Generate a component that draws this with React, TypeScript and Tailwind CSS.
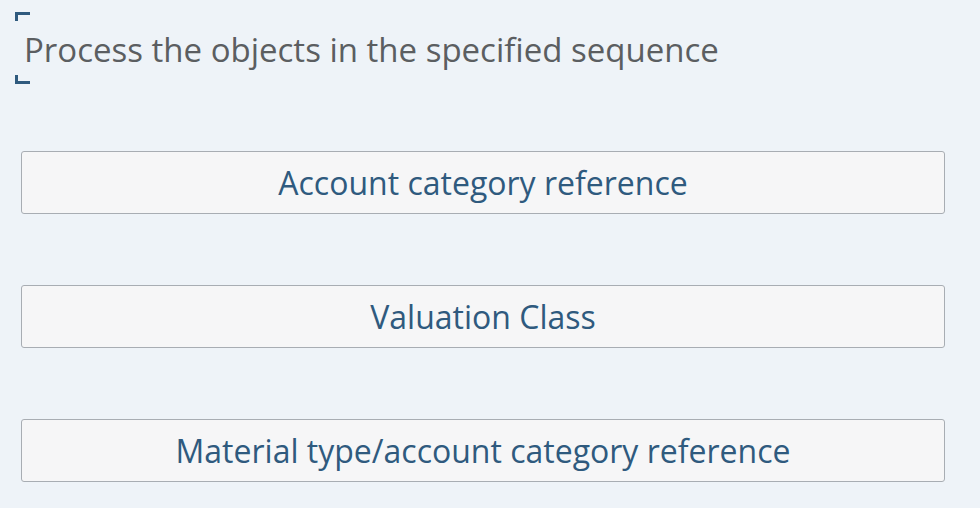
export default function App() {
    const items = [
        "Account category reference",
        "Valuation Class",
        "Material type/account category reference",
    ];

    return (
        <div
            className="w-[980px] h-[508px] bg-[#eef3f8] overflow-hidden"
            style={{ fontFamily: '"Open Sans", "Liberation Sans", sans-serif' }}
        >
            {/* Title with focus brackets */}
            <div className="relative ml-[15px] mt-[12px] h-[72px] flex items-center">
                <span className="absolute left-0 top-0 w-[15px] h-[9px] border-l-[3px] border-t-[3px] border-[#2f5a7e]" />
                <span className="absolute left-0 bottom-0 w-[15px] h-[9px] border-l-[3px] border-b-[3px] border-[#2f5a7e]" />
                <h1 className="pl-[9px] text-[33px] leading-none text-[#5b5e61] mt-[2px]">
                    Process the objects in the specified sequence
                </h1>
            </div>

            {/* Objects */}
            <div className="flex flex-col gap-[71px] pl-[21px] pr-[35px] pt-[67px]">
                {items.map((item) => (
                    <button
                        key={item}
                        className="h-[63px] w-full rounded-[3px] border border-[#a8adb3] bg-[#f6f6f7] text-[32px] text-[#2f5a7e]"
                    >
                        {item}
                    </button>
                ))}
            </div>
        </div>
    );
}
